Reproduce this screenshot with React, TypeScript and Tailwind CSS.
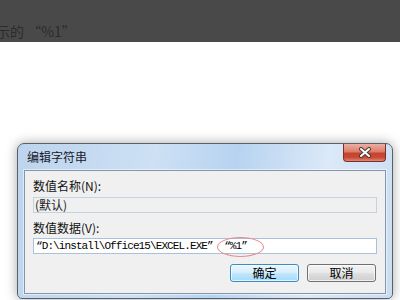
import React from "react";

const cjk = { fontFamily: '"Noto Sans CJK SC", "Noto Sans", sans-serif' };
const mono = { fontFamily: '"Liberation Mono", "Noto Sans CJK SC", monospace' };

export default function App() {
  return (
    <div className="w-[400px] h-[300px] bg-white overflow-hidden flex flex-col">
      <div className="h-[42px] bg-[#494949] shrink-0 pt-[23px] overflow-hidden">
        <div
          className="ml-[-18px] text-[14px] leading-[16px] text-[#2c2c2c] whitespace-nowrap"
          style={cjk}
        >
          显示的 “%1”
        </div>
      </div>

      <div className="ml-[17px] mt-[101px] w-[376px] h-[156px] shrink-0 rounded-t-[7px] rounded-b-[5px] border border-[#59606a] shadow-[0_0_12px_rgba(0,0,0,0.35)] bg-[linear-gradient(100deg,#bcd4ee_0%,#cde0f4_35%,#b7d3f1_55%,#dbe9f8_78%,#c9ddf2_100%)] flex flex-col px-[6px] pb-[4px]">
        <div className="h-[26px] flex items-start justify-between shrink-0">
          <div className="pl-[3px] pt-[6px] text-[12px] leading-[14px] text-[#1a1a2a]" style={cjk}>
            编辑字符串
          </div>
          <div className="w-[43px] h-[18px] rounded-b-[4px] border border-t-0 border-[#7a3028] bg-[linear-gradient(180deg,#eab0a4_0%,#dc7d6c_45%,#c7432d_55%,#c94b36_80%,#df8c7a_100%)] flex items-center justify-center">
            <svg width="14" height="11" viewBox="0 0 14 11">
              <path d="M3 2 L11 9 M11 2 L3 9" stroke="#4a3a3a" strokeWidth="4" strokeLinecap="round" />
              <path d="M3 2 L11 9 M11 2 L3 9" stroke="#ffffff" strokeWidth="2" strokeLinecap="round" />
            </svg>
          </div>
        </div>

        <div className="flex-1 border border-[#8596aa] bg-[#f0f0f0] px-[8px] pt-[8px] flex flex-col shadow-[0_0_0_1px_rgba(255,255,255,0.5)]">
          <div className="h-[14px] leading-[14px] text-[12px] text-[#111]" style={cjk}>
            数值名称(N):
          </div>
          <div className="mt-[4px] h-[16px] border border-[#c3d3e4] bg-[#f0f0f0] pl-[1px] text-[12px] leading-[14px] text-[#222]" style={cjk}>
            (默认)
          </div>
          <div className="mt-[8px] h-[14px] leading-[14px] text-[12px] text-[#111]" style={cjk}>
            数值数据(V):
          </div>
          <div className="relative mt-[3px] h-[16px] border border-[#a9c1dc] bg-white pl-[2px] text-[11px] tracking-[-0.9px] leading-[14px] text-black whitespace-pre" style={mono}>
            {"“D:\\install\\Office15\\EXCEL.EXE”  “%1”"}
            <div className="absolute left-[183px] top-[-2px] w-[47px] h-[20px] rounded-[50%] border border-[#e88a8a]" />
          </div>
          <div className="mt-[10px] flex justify-end gap-[8px] pr-[1px]">
            <div className="w-[69px] h-[18px] rounded-[3px] border border-[#3c8cc4] bg-[linear-gradient(180deg,#eaf6fd_0%,#d9effc_45%,#bee6fd_55%,#a7d9f5_100%)] shadow-[inset_0_0_0_1px_rgba(255,255,255,0.7)] flex items-center justify-center text-[12px] text-black" style={cjk}>
              确定
            </div>
            <div className="w-[69px] h-[18px] rounded-[3px] border border-[#707070] bg-[linear-gradient(180deg,#f2f2f2_0%,#ebebeb_45%,#dddddd_55%,#cfcfcf_100%)] shadow-[inset_0_0_0_1px_rgba(255,255,255,0.7)] flex items-center justify-center text-[12px] text-black" style={cjk}>
              取消
            </div>
          </div>
        </div>
      </div>
    </div>
  );
}
